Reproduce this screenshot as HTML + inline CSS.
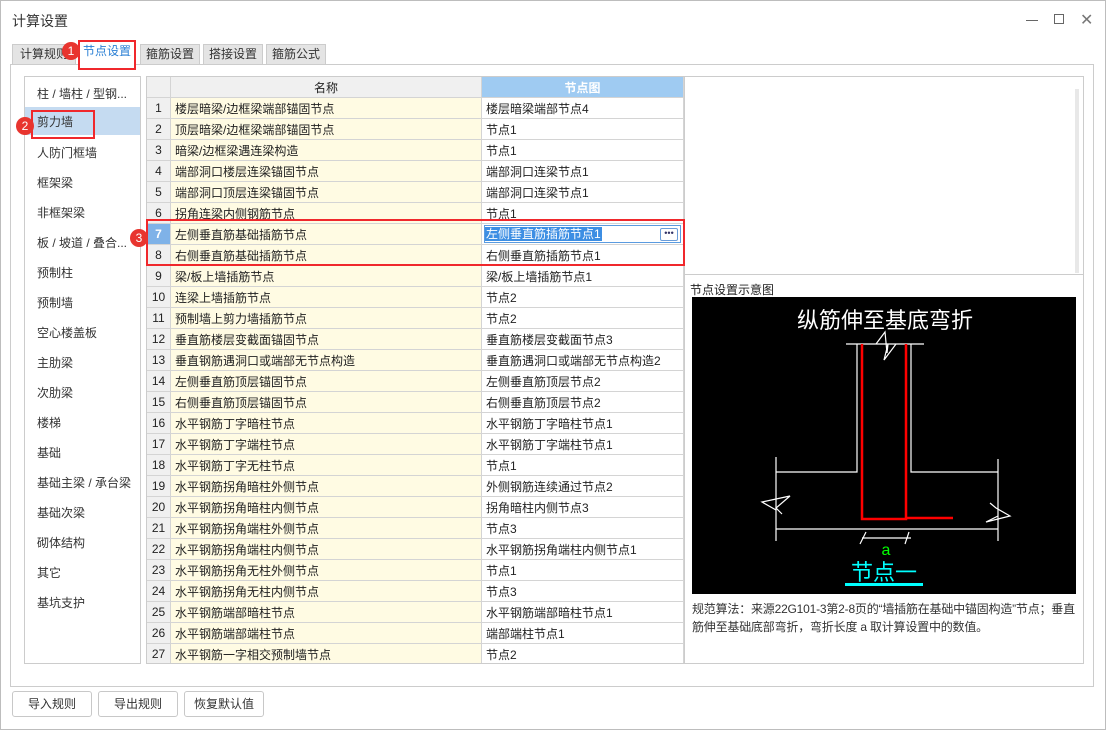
<!DOCTYPE html>
<html><head><meta charset="utf-8"><style>
*{box-sizing:border-box;margin:0;padding:0}
body{width:1106px;height:730px;background:#fff;font-family:"Liberation Sans","Noto Sans CJK SC",sans-serif;font-size:12px;color:#222;position:relative;overflow:hidden}
.abs{position:absolute}
.win{left:0;top:0;width:1106px;height:730px;border:1px solid #bdbdbd}
.tab{top:44px;height:20px;background:#e4e4e4;border:1px solid #ccc;border-bottom:none;text-align:center;line-height:19px;font-size:12px;color:#333}
.panel{left:10px;top:64px;width:1084px;height:623px;border:1px solid #ccc}
.list{left:24px;top:76px;width:117px;height:588px;border:1px solid #ccc}
.li{position:absolute;left:12px;font-size:12px;color:#333}
table{border-collapse:collapse;font-size:12px}
td{border:1px solid #d4d4d4;height:21px;padding:0 4px;white-space:nowrap;overflow:hidden}
td.n{background:#f0f0f0;text-align:center;width:24px;padding:0}
td.a{background:#fffbe3;width:311px}
td.b{width:202px;background:#fff}
.btn{top:691px;width:80px;height:26px;border:1px solid #c8c8c8;border-radius:3px;text-align:center;line-height:24px;background:#fff;color:#333}
.badge{width:18px;height:18px;border-radius:9px;background:#e8352f;color:#fff;font-size:12px;text-align:center;line-height:18px}
.red{border:2px solid #f0282c}
</style></head><body>
<div class="abs win"></div>
<div class="abs" style="left:12px;top:11px;font-size:14px;color:#333">计算设置</div>
<div class="abs" style="left:1026px;top:20px;width:12px;height:1px;background:#666"></div>
<div class="abs" style="left:1054px;top:14px;width:10px;height:10px;border:1px solid #666"></div>
<div class="abs" style="left:1080px;top:10px;font-size:16px;color:#777">✕</div>
<div class="abs panel"></div>
<div class="abs tab" style="left:12px;width:64px">计算规则</div>
<div class="abs tab" style="left:78px;width:58px;top:41px;height:24px;background:#fff;color:#2a7fd4">节点设置</div>
<div class="abs tab" style="left:140px;width:60px">箍筋设置</div>
<div class="abs tab" style="left:203px;width:60px">搭接设置</div>
<div class="abs tab" style="left:266px;width:60px">箍筋公式</div>
<div class="abs red" style="left:78px;top:40px;width:58px;height:30px"></div>
<div class="abs badge" style="left:62px;top:42px">1</div>

<div class="abs list">
<div class="li" style="top:8px">柱 / 墙柱 / 型钢...</div>
<div style="position:absolute;left:0;top:30px;width:115px;height:28px;background:#c5dbf1"></div>
<div class="li" style="top:36px">剪力墙</div>
<div class="li" style="top:67px">人防门框墙</div>
<div class="li" style="top:97px">框架梁</div>
<div class="li" style="top:127px">非框架梁</div>
<div class="li" style="top:157px">板 / 坡道 / 叠合...</div>
<div class="li" style="top:187px">预制柱</div>
<div class="li" style="top:217px">预制墙</div>
<div class="li" style="top:247px">空心楼盖板</div>
<div class="li" style="top:277px">主肋梁</div>
<div class="li" style="top:307px">次肋梁</div>
<div class="li" style="top:337px">楼梯</div>
<div class="li" style="top:367px">基础</div>
<div class="li" style="top:397px">基础主梁 / 承台梁</div>
<div class="li" style="top:427px">基础次梁</div>
<div class="li" style="top:457px">砌体结构</div>
<div class="li" style="top:487px">其它</div>
<div class="li" style="top:517px">基坑支护</div>
</div>
<div class="abs red" style="left:31px;top:110px;width:64px;height:29px"></div>
<div class="abs badge" style="left:16px;top:117px">2</div>

<div class="abs" style="left:146px;top:76px;width:938px;height:588px;border:1px solid #ccc;overflow:hidden">
<table style="position:absolute;left:-1px;top:-1px;width:538px">
<tr><td class="n" style="height:20px"></td><td style="background:#f0f0f0;text-align:center;height:20px">名称</td><td style="background:#9fcbf2;text-align:center;color:#fff;font-weight:bold">节点图</td></tr>
<tr><td class="n">1</td><td class="a">楼层暗梁/边框梁端部锚固节点</td><td class="b">楼层暗梁端部节点4</td></tr>
<tr><td class="n">2</td><td class="a">顶层暗梁/边框梁端部锚固节点</td><td class="b">节点1</td></tr>
<tr><td class="n">3</td><td class="a">暗梁/边框梁遇连梁构造</td><td class="b">节点1</td></tr>
<tr><td class="n">4</td><td class="a">端部洞口楼层连梁锚固节点</td><td class="b">端部洞口连梁节点1</td></tr>
<tr><td class="n">5</td><td class="a">端部洞口顶层连梁锚固节点</td><td class="b">端部洞口连梁节点1</td></tr>
<tr><td class="n">6</td><td class="a">拐角连梁内侧钢筋节点</td><td class="b">节点1</td></tr>
<tr><td class="n" style="background:#7fb2e8;color:#fff;font-weight:bold">7</td><td class="a">左侧垂直筋基础插筋节点</td><td class="b" style="padding:1px 2px"><div style="border:1px solid #5a9be0;height:18px;position:relative"><span style="background:#3d8ee3;color:#fff;padding:0 1px;line-height:16px">左侧垂直筋插筋节点1</span><span style="position:absolute;right:2px;top:2px;width:18px;height:13px;border:1px solid #6a9cd8;border-radius:2px;font-size:9px;line-height:9px;text-align:center;color:#336">•••</span></div></td></tr>
<tr><td class="n">8</td><td class="a">右侧垂直筋基础插筋节点</td><td class="b">右侧垂直筋插筋节点1</td></tr>
<tr><td class="n">9</td><td class="a">梁/板上墙插筋节点</td><td class="b">梁/板上墙插筋节点1</td></tr>
<tr><td class="n">10</td><td class="a">连梁上墙插筋节点</td><td class="b">节点2</td></tr>
<tr><td class="n">11</td><td class="a">预制墙上剪力墙插筋节点</td><td class="b">节点2</td></tr>
<tr><td class="n">12</td><td class="a">垂直筋楼层变截面锚固节点</td><td class="b">垂直筋楼层变截面节点3</td></tr>
<tr><td class="n">13</td><td class="a">垂直钢筋遇洞口或端部无节点构造</td><td class="b">垂直筋遇洞口或端部无节点构造2</td></tr>
<tr><td class="n">14</td><td class="a">左侧垂直筋顶层锚固节点</td><td class="b">左侧垂直筋顶层节点2</td></tr>
<tr><td class="n">15</td><td class="a">右侧垂直筋顶层锚固节点</td><td class="b">右侧垂直筋顶层节点2</td></tr>
<tr><td class="n">16</td><td class="a">水平钢筋丁字暗柱节点</td><td class="b">水平钢筋丁字暗柱节点1</td></tr>
<tr><td class="n">17</td><td class="a">水平钢筋丁字端柱节点</td><td class="b">水平钢筋丁字端柱节点1</td></tr>
<tr><td class="n">18</td><td class="a">水平钢筋丁字无柱节点</td><td class="b">节点1</td></tr>
<tr><td class="n">19</td><td class="a">水平钢筋拐角暗柱外侧节点</td><td class="b">外侧钢筋连续通过节点2</td></tr>
<tr><td class="n">20</td><td class="a">水平钢筋拐角暗柱内侧节点</td><td class="b">拐角暗柱内侧节点3</td></tr>
<tr><td class="n">21</td><td class="a">水平钢筋拐角端柱外侧节点</td><td class="b">节点3</td></tr>
<tr><td class="n">22</td><td class="a">水平钢筋拐角端柱内侧节点</td><td class="b">水平钢筋拐角端柱内侧节点1</td></tr>
<tr><td class="n">23</td><td class="a">水平钢筋拐角无柱外侧节点</td><td class="b">节点1</td></tr>
<tr><td class="n">24</td><td class="a">水平钢筋拐角无柱内侧节点</td><td class="b">节点3</td></tr>
<tr><td class="n">25</td><td class="a">水平钢筋端部暗柱节点</td><td class="b">水平钢筋端部暗柱节点1</td></tr>
<tr><td class="n">26</td><td class="a">水平钢筋端部端柱节点</td><td class="b">端部端柱节点1</td></tr>
<tr><td class="n">27</td><td class="a">水平钢筋一字相交预制墙节点</td><td class="b">节点2</td></tr>
<tr><td class="n">28</td><td class="a">剪力墙遇框架柱/框支柱/端柱平齐一侧</td><td class="b">节点2</td></tr>
</table>
<div style="position:absolute;left:537px;top:0;width:1px;height:588px;background:#ccc"></div>
<div style="position:absolute;left:928px;top:12px;width:4px;height:184px;background:#e8e8e8"></div>
<div style="position:absolute;left:538px;top:197px;width:400px;height:1px;background:#ccc"></div>
</div>
<div class="abs red" style="left:146px;top:219px;width:539px;height:47px"></div>
<div class="abs badge" style="left:130px;top:229px">3</div>

<div class="abs" style="left:690px;top:281px;font-size:12px;color:#222">节点设置示意图</div>
<svg class="abs" style="left:692px;top:297px" width="384" height="297" viewBox="692 297 384 297">
<rect x="692" y="297" width="384" height="297" fill="#000"/>
<text x="885" y="328" fill="#fff" font-size="22" text-anchor="middle" font-family="Noto Sans CJK SC,sans-serif">纵筋伸至基底弯折</text>
<g stroke="#fff" stroke-width="1.2" fill="none">
<path d="M846 344H924M857 344V472H776M911 344V472H998M776 457V541M998 459V541M776 529H998"/>
<path d="M876 344L885 332L887 353L888 344L884 360L896 344"/>
<path d="M776 510L762 502L790 496L776 508L782 514"/>
<path d="M998 516L986 522L1010 516L996 508L990 503"/>
<path d="M862 538H911M866 532L860 544M909 532L905 544"/>
</g>
<path d="M862 344V519H906V344M905 518H953" stroke="#f00" stroke-width="2.5" fill="none"/>
<text x="886" y="555" fill="#0f0" font-size="16" text-anchor="middle">a</text>
<text x="884" y="580" fill="#0ff" font-size="22" text-anchor="middle" font-family="Noto Sans CJK SC,sans-serif">节点一</text>
<rect x="845" y="583" width="78" height="3" fill="#0ff"/>
</svg>
<div class="abs" style="left:692px;top:600px;width:385px;font-size:12px;line-height:18px;color:#333;letter-spacing:-0.2px">规范算法：来源22G101-3第2-8页的“墙插筋在基础中锚固构造”节点；垂直筋伸至基础底部弯折，弯折长度 a 取计算设置中的数值。</div>

<div class="abs btn" style="left:12px">导入规则</div>
<div class="abs btn" style="left:98px">导出规则</div>
<div class="abs btn" style="left:184px">恢复默认值</div>
</body></html>
